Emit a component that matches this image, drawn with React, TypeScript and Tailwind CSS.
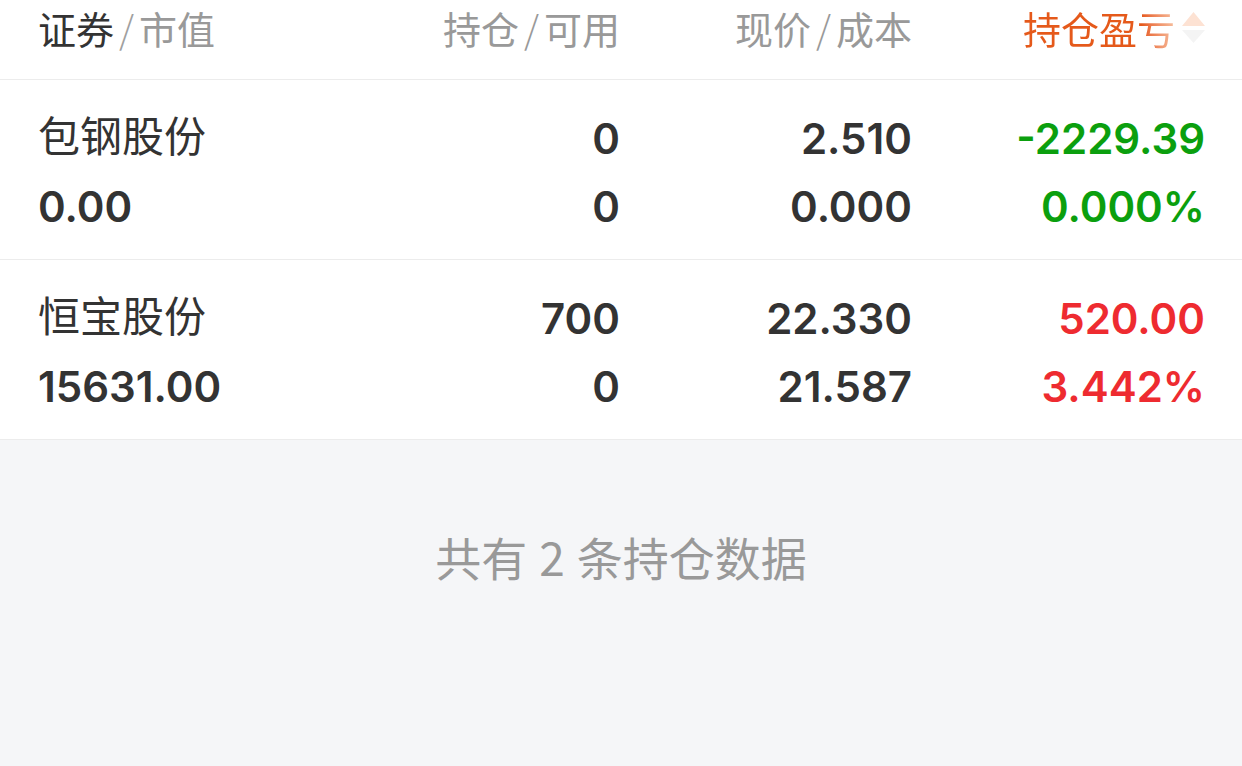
import React from 'react';

type Row = {
  name: string;
  value: string;
  hold: string;
  avail: string;
  price: string;
  cost: string;
  pnl: string;
  pct: string;
  up: boolean;
};

const rows: Row[] = [
  { name: '包钢股份', value: '0.00', hold: '0', avail: '0', price: '2.510', cost: '0.000', pnl: '-2229.39', pct: '0.000%', up: false },
  { name: '恒宝股份', value: '15631.00', hold: '700', avail: '0', price: '22.330', cost: '21.587', pnl: '520.00', pct: '3.442%', up: true },
];

const cjk = { fontFamily: '"Noto Sans CJK SC", "Noto Sans", sans-serif' };
const num = { fontFamily: 'Inter, "Noto Sans CJK SC", sans-serif' };

const SortIcon = () => (
  <svg width="23" height="32" viewBox="0 0 23 32" className="ml-[7px] shrink-0">
    <path d="M11.5 0 L23 14 L0 14 Z" fill="#fde2d3" />
    <path d="M0 18 L23 18 L11.5 31 Z" fill="#f4f4f4" />
  </svg>
);

export default function App() {
  return (
    <div className="w-[1242px] h-[766px] flex flex-col bg-[#f5f6f8] overflow-hidden" style={cjk}>
      {/* header */}
      <div className="bg-white h-[80px] border-b border-[#ececec] flex items-start pl-[38px] pr-[37px] text-[38px] leading-[56px]">
        <div className="w-[290px] flex items-center">
          <span className="text-[#333]">证券</span>
          <span className="text-[#a0a0a0] mx-[5px] font-light">/</span>
          <span className="text-[#999]">市值</span>
        </div>
        <div className="w-[292px] flex items-center justify-end text-[#999]">
          <span>持仓</span>
          <span className="mx-[5px] font-light">/</span>
          <span>可用</span>
        </div>
        <div className="w-[292px] flex items-center justify-end text-[#999]">
          <span>现价</span>
          <span className="mx-[5px] font-light">/</span>
          <span>成本</span>
        </div>
        <div className="w-[293px] flex items-center justify-end">
          <span className="bg-linear-to-r from-[#e5591a] from-[78%] to-[#f5bf9f] bg-clip-text text-transparent">持仓盈亏</span>
          <SortIcon />
        </div>
      </div>

      {/* rows */}
      {rows.map((r) => {
        const color = r.up ? 'text-[#ee2b30]' : 'text-[#0b9f0e]';
        return (
          <div key={r.name} className="bg-white border-b border-[#ececec] flex pl-[38px] pr-[37px] pt-[24px] pb-[19px]">
            <div className="w-[290px] flex flex-col">
              <div className="h-[68px] flex items-center text-[42px] text-[#333] -mt-[5px] mb-[5px]">{r.name}</div>
              <div className="h-[68px] flex items-center text-[42px] font-semibold text-[#333]" style={num}>{r.value}</div>
            </div>
            <div className="w-[292px] flex flex-col items-end text-[42px] font-semibold text-[#333]" style={num}>
              <div className="h-[68px] flex items-center">{r.hold}</div>
              <div className="h-[68px] flex items-center">{r.avail}</div>
            </div>
            <div className="w-[292px] flex flex-col items-end text-[42px] font-semibold text-[#333]" style={num}>
              <div className="h-[68px] flex items-center">{r.price}</div>
              <div className="h-[68px] flex items-center">{r.cost}</div>
            </div>
            <div className={`w-[293px] flex flex-col items-end text-[42px] font-semibold ${color}`} style={num}>
              <div className="h-[68px] flex items-center">{r.pnl}</div>
              <div className="h-[68px] flex items-center">{r.pct}</div>
            </div>
          </div>
        );
      })}

      {/* footer */}
      <div className="flex justify-center items-center pt-[89px] text-[46px] leading-[54px] text-[#999]">
        <span>共有</span>
        <span className="mx-[12px]">2</span>
        <span>条持仓数据</span>
      </div>
    </div>
  );
}
